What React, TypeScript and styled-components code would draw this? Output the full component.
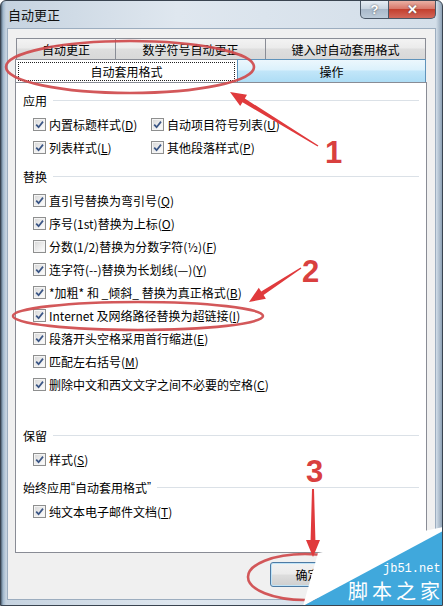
import React from "react";
import styled, { createGlobalStyle } from "styled-components";

const GlobalStyle = createGlobalStyle`
  html, body { margin: 0; padding: 0; background: #fff; }
  body { font-family: "Noto Sans CJK SC", "Liberation Sans", sans-serif; color: #000; }
  #root { width: 443px; height: 606px; }
`;

const Window = styled.div`
  position: relative;
  width: 443px;
  height: 606px;
  box-sizing: border-box;
  display: flex;
  flex-direction: column;
  padding: 0 6px 5px 6px;
  border: 1px solid #3a4450;
  border-radius: 6px 6px 0 0;
  overflow: hidden;
  background: linear-gradient(
    to right,
    #4f6274 0,
    #9fb6cb 2px,
    #c6d3e0 5px,
    #dfe7ef 40%,
    #d3dee9 calc(100% - 6px),
    #8fa3b6 100%
  );
`;

const TitleBar = styled.div`
  height: 27px;
  display: flex;
  align-items: flex-start;
  padding-left: 1px;
`;

const Title = styled.div`
  font-size: 13px;
  line-height: 27px;
  color: #111;
`;

const Caption = styled.div`
  margin-left: auto;
  display: flex;
`;

const CaptionButton = styled.div<{ $w: number; $close?: boolean }>`
  width: ${(p) => p.$w}px;
  height: 18px;
  box-sizing: border-box;
  display: flex;
  align-items: center;
  justify-content: center;
  border: 1px solid #4a5766;
  border-top: none;
  font: bold 13px "Liberation Sans", sans-serif;
  color: #fff;
  text-shadow: 0 0 2px #444;
  border-radius: ${(p) => (p.$close ? "0 0 5px 0" : "0 0 0 5px")};
  margin-left: ${(p) => (p.$close ? "-1px" : "0")};
  background: ${(p) =>
    p.$close
      ? "linear-gradient(#eab0a4 0%, #d8786a 45%, #c4402f 50%, #d2675a 100%)"
      : "linear-gradient(#e6edf4 0%, #c8d4e0 45%, #a9b9ca 50%, #bccbd9 100%)"};
`;

const Client = styled.div`
  flex: 1;
  display: flex;
  flex-direction: column;
  background: #f0f0f0;
  border: 1px solid #9cadbf;
  padding: 9px 8px 0 7px;
`;

const TabRow = styled.div<{ $h: number; $left: number }>`
  display: flex;
  height: ${(p) => p.$h}px;
  padding-left: ${(p) => p.$left}px;
  padding-right: 2px;
`;

type TabState = "idle" | "selected" | "hover";

const Tab = styled.div<{ $w: number; $state: TabState }>`
  width: ${(p) => p.$w}px;
  box-sizing: border-box;
  display: flex;
  align-items: center;
  justify-content: center;
  font-size: 12px;
  border: 1px solid ${(p) => (p.$state === "hover" ? "#5f93bb" : "#898c95")};
  border-bottom: none;
  margin-right: -1px;
  padding: ${(p) => (p.$state === "selected" ? "2px 2px 1px 2px" : "0")};
  background: ${(p) =>
    p.$state === "selected"
      ? "#fff"
      : p.$state === "hover"
      ? "linear-gradient(#ecf7fd 0%, #dbf1fc 45%, #c2e6f9 50%, #aeddf5 100%)"
      : "linear-gradient(#f3f3f3 0%, #ebebeb 45%, #dedede 50%, #d8d8d8 100%)"};
`;

const FocusBox = styled.div`
  flex: 1;
  align-self: stretch;
  display: flex;
  align-items: center;
  justify-content: center;
  border: 1px dotted #222;
`;

const Panel = styled.div`
  flex: 1;
  background: #fff;
  border: 1px solid #898c95;
  padding: 8px 7px 0 7px;
  display: flex;
  flex-direction: column;
`;

const Section = styled.div<{ $gap: number }>`
  margin-top: ${(p) => p.$gap}px;
`;

const Heading = styled.div`
  height: 18px;
  display: flex;
  align-items: center;
  font-size: 12px;
  &::after {
    content: "";
    flex: 1;
    height: 1px;
    margin-left: 6px;
    background: #dbe1e7;
  }
`;

const Quote = styled.span`
  font-family: "Liberation Sans", sans-serif;
`;

const Rows = styled.div<{ $cols?: boolean }>`
  margin-top: 4px;
  padding-left: 10px;
  display: grid;
  grid-template-columns: ${(p) => (p.$cols ? "118px auto" : "auto")};
`;

const Row = styled.div`
  height: 23px;
  display: flex;
  align-items: center;
  font-size: 12px;
  white-space: nowrap;
`;

const Box = styled.span`
  width: 13px;
  height: 13px;
  box-sizing: border-box;
  margin-right: 3px;
  border: 1px solid #8e8f8f;
  background: linear-gradient(135deg, #d6d6d6 0%, #f4f4f4 70%, #fff 100%);
  box-shadow: inset 0 0 0 1px #f4f4f4;
  display: flex;
  align-items: center;
  justify-content: center;
`;

const Footer = styled.div`
  height: 46px;
  display: flex;
  justify-content: flex-end;
  align-items: flex-start;
  padding: 9px 82px 0 0;
  box-sizing: border-box;
`;

const Button = styled.div<{ $default?: boolean }>`
  width: 75px;
  height: 25px;
  box-sizing: border-box;
  display: flex;
  align-items: center;
  justify-content: center;
  font-size: 12px;
  border: 1px solid ${(p) => (p.$default ? "#4d7aa3" : "#707070")};
  border-radius: 3px;
  box-shadow: inset 0 0 0 1px ${(p) => (p.$default ? "#bfe3f7" : "#fcfcfc")};
  background: linear-gradient(#f2f2f2 0%, #ebebeb 48%, #dddddd 52%, #cfcfcf 100%);
`;

const Overlay = styled.svg`
  position: absolute;
  left: -1px;
  top: -1px;
  width: 443px;
  height: 606px;
  pointer-events: none;
`;

const Check = ({ on = true }: { on?: boolean }) => (
  <Box>
    {on && (
      <svg width="9" height="9" viewBox="0 0 9 9">
        <path d="M1.2 4.6 L3.6 7.2 L8 1.6" fill="none" stroke="#3a5585" strokeWidth="1.7" />
      </svg>
    )}
  </Box>
);

const Item = ({ text, k, on = true }: { text: string; k: string; on?: boolean }) => (
  <Row>
    <Check on={on} />
    <span>
      {text}(<u>{k}</u>)
    </span>
  </Row>
);

function arrow(x1: number, y1: number, x2: number, y2: number, head = 16, hw = 6.5, tail = 0.7, neck = 2.2) {
  const len = Math.hypot(x2 - x1, y2 - y1);
  const ux = (x2 - x1) / len;
  const uy = (y2 - y1) / len;
  const nx = -uy;
  const ny = ux;
  const bx = x2 - ux * head;
  const by = y2 - uy * head;
  const p = (x: number, y: number) => `${x.toFixed(1)},${y.toFixed(1)}`;
  return [
    p(x1 + nx * tail, y1 + ny * tail),
    p(bx + nx * neck, by + ny * neck),
    p(bx + nx * hw, by + ny * hw),
    p(x2, y2),
    p(bx - nx * hw, by - ny * hw),
    p(bx - nx * neck, by - ny * neck),
    p(x1 - nx * tail, y1 - ny * tail),
  ].join(" ");
}

const RED = "#d9403f";

export default function App() {
  return (
    <>
      <GlobalStyle />
      <Window>
        <TitleBar>
          <Title>自动更正</Title>
          <Caption>
            <CaptionButton $w={29}>?</CaptionButton>
            <CaptionButton $w={48} $close>
              ✕
            </CaptionButton>
          </Caption>
        </TitleBar>
        <Client>
          <TabRow $h={21} $left={1}>
            <Tab $w={100} $state="idle">自动更正</Tab>
            <Tab $w={151} $state="idle">数学符号自动更正</Tab>
            <Tab $w={161} $state="idle">键入时自动套用格式</Tab>
          </TabRow>
          <TabRow $h={23} $left={0}>
            <Tab $w={223} $state="selected">
              <FocusBox>自动套用格式</FocusBox>
            </Tab>
            <Tab $w={189} $state="hover">操作</Tab>
          </TabRow>
          <Panel>
            <Section $gap={0}>
              <Heading>应用</Heading>
              <Rows $cols>
                <Item text="内置标题样式" k="D" />
                <Item text="自动项目符号列表" k="U" />
                <Item text="列表样式" k="L" />
                <Item text="其他段落样式" k="P" />
              </Rows>
            </Section>
            <Section $gap={8}>
              <Heading>替换</Heading>
              <Rows>
                <Item text="直引号替换为弯引号" k="Q" />
                <Item text="序号(1st)替换为上标" k="O" />
                <Item text="分数(1/2)替换为分数字符(½)" k="F" on={false} />
                <Item text="连字符(--)替换为长划线(—)" k="Y" />
                <Item text="*加粗* 和 _倾斜_ 替换为真正格式" k="B" />
                <Item text="Internet 及网络路径替换为超链接" k="I" />
                <Item text="段落开头空格采用首行缩进" k="E" />
                <Item text="匹配左右括号" k="M" />
                <Item text="删除中文和西文文字之间不必要的空格" k="C" />
              </Rows>
            </Section>
            <Section $gap={30}>
              <Heading>保留</Heading>
              <Rows>
                <Item text="样式" k="S" />
              </Rows>
            </Section>
            <Section $gap={7}>
              <Heading>
                始终应用<Quote>“</Quote>自动套用格式<Quote>”</Quote>
              </Heading>
              <Rows>
                <Item text="纯文本电子邮件文档" k="T" />
              </Rows>
            </Section>
          </Panel>
          <Footer>
            <Button $default>确定</Button>
          </Footer>
        </Client>

        <Overlay viewBox="0 0 443 606">
          <g fill="none" stroke="#cf4a4c" strokeWidth="2.6" opacity="0.92">
            <ellipse cx="130" cy="67" rx="124" ry="26" />
            <ellipse cx="138" cy="316" rx="125" ry="14" />
            <ellipse cx="305" cy="577" rx="57" ry="23" />
          </g>
          <g fill="#e03a3c">
            <polygon points={arrow(318, 146, 230, 92)} />
            <polygon points={arrow(301, 268, 249, 302)} />
            <polygon points={arrow(313, 489, 313, 557, 17, 7, 1, 2.4)} />
          </g>
          <g fill={RED} fontFamily="'Liberation Sans', sans-serif" fontWeight="bold" fontSize="31">
            <text x="325" y="163">1</text>
            <text x="302" y="282">2</text>
            <text x="306" y="482">3</text>
          </g>
          <polygon points="303,606 318,553 443,527 443,533" fill="#fff" />
          <polygon points="303,606 443,531 443,606" fill="#40a8dc" />
          <text x="383" y="572" fill="#fff" fontFamily="'Liberation Mono', monospace" fontSize="12">
            jb51.net
          </text>
          <text
            x="348"
            y="599"
            fill="#fff"
            fontFamily="'Noto Sans CJK SC', sans-serif"
            fontSize="20"
            letterSpacing="4"
          >
            脚本之家
          </text>
        </Overlay>
      </Window>
    </>
  );
}
